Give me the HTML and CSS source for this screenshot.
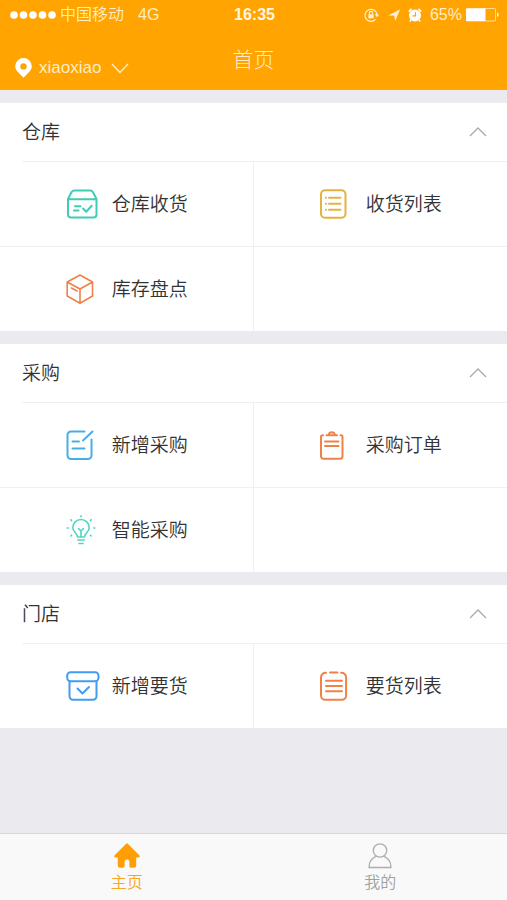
FILE: index.html
```html
<!DOCTYPE html>
<html lang="zh-CN">
<head>
    <meta charset="UTF-8">
    <meta name="viewport" content="width=device-width, initial-scale=1.0">
    <title>首页</title>
    <link rel="stylesheet" href="styles.css">
</head>
<body>
    <header class="header">
        <!-- Status bar -->
        <div class="status">
            <div class="status-left">
                <svg class="signal" width="46" height="8" viewBox="0 0 46 8" fill="#fff">
                    <circle cx="4" cy="4" r="3.800"/>
                    <circle cx="13.500" cy="4" r="3.800"/>
                    <circle cx="23" cy="4" r="3.800"/>
                    <circle cx="32.500" cy="4" r="3.800"/>
                    <circle cx="42" cy="4" r="3.800"/>
                </svg>
                <span class="carrier">中国移动</span>
                <span class="network">4G</span>
            </div>
            <span class="time">16:35</span>
            <div class="status-right">
                <svg width="16" height="14" viewBox="0 0 16 14" fill="none" stroke="#fff2d6">
                    <path d="M11.500 11.300A6 6 0 1 1 13 7" stroke-width="1.200"/>
                    <path d="M10.800 6.200h4.400L13 9.200z" fill="#fff2d6" stroke="none"/>
                    <path d="M5.400 6.500V5a1.600 1.600 0 0 1 3.200 0v1.500" stroke-width="1.100"/>
                    <rect x="4.400" y="6.300" width="5.200" height="4" fill="#fff2d6" stroke="none"/>
                </svg>
                <svg class="arrow" width="12" height="12" viewBox="0 0 12 12" fill="#fff2d6">
                    <path d="M12 .5L7.200 12 6.200 6.500H.3z"/>
                </svg>
                <svg class="alarm" width="14" height="14" viewBox="0 0 14 14">
                    <circle cx="7" cy="7.500" r="6" fill="#fff"/>
                    <path d="M.8 3.600L3.600.8M13.200 3.600L10.400.8M3 12l-1.200 1.400M11 12l1.200 1.400" stroke="#fff" stroke-width="1.600"/>
                    <path d="M7.400 4.200v3.600H4.600" fill="none" stroke="#ffa400" stroke-width="1.200"/>
                </svg>
                <span>65%</span>
                <svg class="battery" width="33" height="14" viewBox="0 0 33 14">
                    <rect x=".5" y=".5" width="29" height="12.500" rx="1" fill="none" stroke="#ffdc96"/>
                    <rect x="0" y=".5" width="19.500" height="12.500" fill="#fff"/>
                    <path d="M31 4.500c2.300.6 2.300 4 0 4.600z" fill="#fff2d6"/>
                </svg>
            </div>
        </div>

        <!-- Title bar -->
        <div class="navbar">
            <button type="button" class="location">
                <svg width="17" height="20" viewBox="0 0 17 20">
                    <path fill="#fff" fill-rule="evenodd" d="M8.500 0a8.300 8.300 0 0 0-8.300 8.300c0 4.300 4.400 7.200 8.300 11.500 3.900-4.300 8.300-7.200 8.300-11.500A8.300 8.300 0 0 0 8.500 0zm0 5.200a3.200 3.200 0 1 1 0 6.400 3.200 3.200 0 0 1 0-6.400z"/>
                </svg>
                <span>xiaoxiao</span>
                <svg class="down" width="18" height="11" viewBox="0 0 18 11" fill="none" stroke="#ffedc8" stroke-width="1.400">
                    <path d="M1 1l8 8.500L17 1"/>
                </svg>
            </button>
            <h1>首页</h1>
        </div>
    </header>

    <main class="content">
        <!-- Warehouse -->
        <section class="panel">
            <h2>
                <button type="button" class="panel-title">
                    <span>仓库</span>
                    <svg width="18" height="10" viewBox="0 0 18 10"><path d="M1 9l8-8 8 8"/></svg>
                </button>
            </h2>
            <div class="grid">
                <a class="item" href="#">
                    <svg class="icon teal" viewBox="0 0 34 30">
                        <path d="M2 10v15.500a3 3 0 0 0 3 3h22.500a3 3 0 0 0 3-3V10L27 3.200a3.500 3.500 0 0 0-3-1.800H8.500a3.500 3.500 0 0 0-3 1.800zM2 10.200h28.500"/>
                        <path d="M9 17.300h5.500M8 21.500h4.500M17 19.500l3.200 3.200 5.500-6"/>
                    </svg>
                    <span>仓库收货</span>
                </a>
                <a class="item" href="#">
                    <svg class="icon yellow" viewBox="0 0 34 30">
                        <rect x="1" y="1.200" width="24.500" height="27.600" rx="4"/>
                        <path d="M9 8.700h11.500M9 14.700h11.500M9 20.700h11.500M5.800 8.700h.2M5.800 14.700h.2M5.800 20.700h.2"/>
                    </svg>
                    <span>收货列表</span>
                </a>
                <a class="item" href="#">
                    <svg class="icon orange thin" viewBox="0 0 34 30">
                        <path d="M14 1L26.500 8v14L14 29.200 1.200 22V8zM1.200 8L14 15l12.500-7M14 15v14M5.500 14l5.500 3"/>
                    </svg>
                    <span>库存盘点</span>
                </a>
                <div class="item"></div>
            </div>
        </section>

        <!-- Purchase -->
        <section class="panel">
            <h2>
                <button type="button" class="panel-title">
                    <span>采购</span>
                    <svg width="18" height="10" viewBox="0 0 18 10"><path d="M1 9l8-8 8 8"/></svg>
                </button>
            </h2>
            <div class="grid">
                <a class="item" href="#">
                    <svg class="icon blue" viewBox="0 0 34 30">
                        <path d="M18.500 1.500H5a3.500 3.500 0 0 0-3.500 3.500v20.500A3.500 3.500 0 0 0 5 29h17a3.500 3.500 0 0 0 3.500-3.500V9.500M17 10.500l9.500-9M6.500 11.500h6.500M6.500 18.500h12"/>
                    </svg>
                    <span>新增采购</span>
                </a>
                <a class="item" href="#">
                    <svg class="icon orange" viewBox="0 0 34 30">
                        <path d="M3 5.300h-.500A1.500 1.500 0 0 0 1 6.800v19.500a2.500 2.500 0 0 0 2.500 2.500h16.500a2.500 2.500 0 0 0 2.500-2.500V6.800A1.500 1.500 0 0 0 21 5.300h-.500"/>
                        <path d="M6.500 5.300h10.500M8.500 5.300a3.300 3.800 0 0 1 6.500 0M5 11.500h13.500M5 16h13.500"/>
                    </svg>
                    <span>采购订单</span>
                </a>
                <a class="item" href="#">
                    <svg class="icon mint" viewBox="0 0 34 30">
                        <path d="M11.500 22c0-3.800-4.700-4.800-4.700-9.300a8.200 8.200 0 0 1 16.400 0c0 4.500-4.700 5.500-4.700 9.300zM11.800 25h6.500M13 28.500h4M15 22v-6l-2.500-2.500M15 16l2.500-2.500"/>
                        <path d="M15 .8v1M4.800 4.800l.8.800M25.200 4.800l-.8.800M1.200 13h1M27.800 13h1M4.800 21l.8-.8M25.200 21l-.8-.8"/>
                    </svg>
                    <span>智能采购</span>
                </a>
                <div class="item"></div>
            </div>
        </section>

        <!-- Store -->
        <section class="panel">
            <h2>
                <button type="button" class="panel-title">
                    <span>门店</span>
                    <svg width="18" height="10" viewBox="0 0 18 10"><path d="M1 9l8-8 8 8"/></svg>
                </button>
            </h2>
            <div class="grid">
                <a class="item" href="#">
                    <svg class="icon azure" viewBox="0 0 34 30">
                        <rect x="1.200" y="1.200" width="31.300" height="9" rx="3.500"/>
                        <path d="M3.500 10.200v15a3.500 3.500 0 0 0 3.500 3.500h20a3.500 3.500 0 0 0 3.500-3.500v-15M11.500 17.500l5 5 6.500-6.500"/>
                    </svg>
                    <span>新增要货</span>
                </a>
                <a class="item" href="#">
                    <svg class="icon orange" viewBox="0 0 34 30">
                        <path d="M6 1.800a4.500 4.500 0 0 0-5 4.500V24.500a4.300 4.300 0 0 0 4.300 4.300h16.500a4.300 4.300 0 0 0 4.300-4.300V6.300a4.500 4.500 0 0 0-5-4.500M10 1.500h7.500M6 9.700h16M6 15h16M6 20.300h16"/>
                    </svg>
                    <span>要货列表</span>
                </a>
            </div>
        </section>
    </main>

    <!-- Bottom tabs -->
    <nav class="tabbar">
        <a class="tab active" href="#">
            <svg width="26" height="26" viewBox="0 0 26 26">
                <path fill="#ff9f05" d="M11.900.9L.7 12.200c-1 1-.4 2.300.8 2.300h2.300V22.500c0 1.300.8 2.200 2 2.200h3.200c1 0 1.600-.6 1.600-1.600v-4.200a2.400 2.400 0 0 1 4.800 0v4.200c0 1 .6 1.600 1.600 1.600h3.200c1.200 0 2-.9 2-2.200v-8h2.300c1.200 0 1.800-1.300.8-2.300L14.100.9a1.500 1.500 0 0 0-2.200 0z"/>
            </svg>
            <span>主页</span>
        </a>
        <a class="tab" href="#">
            <svg width="26" height="26" viewBox="0 0 26 26" fill="none" stroke="#adadad" stroke-width="1.300">
                <circle cx="13" cy="7.500" r="6.700"/>
                <path d="M9.500 13.200C5 15 2 18.700 2 24.500h22c0-5.800-3-9.500-7.500-11.300"/>
            </svg>
            <span>我的</span>
        </a>
    </nav>
</body>
</html>
```
FILE: styles.css
```css
* {
    box-sizing: border-box;
}

body {
    display: flex;
    flex-direction: column;
    min-height: 100vh;
    margin: 0;
    background-color: #eaeaef;
    color: #333;
    font-family: "Liberation Sans", "Noto Sans CJK SC", sans-serif;
    font-size: 19px;
    font-weight: 350;
}

a {
    color: inherit;
    text-decoration: none;
}

button {
    border: none;
    background: none;
    color: inherit;
    font: inherit;
    cursor: pointer;
}

svg {
    flex: none;
}

/* Header */
.header {
    height: 90px;
    background-color: #ffa400;
    color: #ffedc8;
}

.status {
    display: grid;
    grid-template-columns: 1fr auto 1fr;
    align-items: center;
    height: 30px;
    padding: 0 8px 0 10px;
    font-size: 16px;
    line-height: 30px;
}

.status-left,
.status-right {
    display: flex;
    align-items: center;
}

.status-right {
    justify-content: flex-end;
}

.signal {
    margin-right: 4px;
}

.network {
    margin-left: 14px;
}

.time {
    color: #fff6e4;
    font-weight: bold;
}

.arrow {
    margin-left: 8px;
}

.alarm {
    margin: 0 8px;
}

.battery {
    margin-left: 4px;
}

.navbar {
    display: grid;
    grid-template-columns: 1fr auto 1fr;
    height: 60px;
}

.location {
    display: flex;
    align-items: center;
    justify-self: start;
    height: 44px;
    margin-top: 16px;
    padding: 0 0 0 15px;
    font-size: 17px;
}

.location span {
    margin: 0 10px 0 7px;
}

.navbar h1 {
    margin: 0;
    font-size: 21px;
    font-weight: 300;
    line-height: 60px;
}

/* Panels */
.content {
    flex: 1;
    padding-top: 13px;
}

.panel {
    margin-bottom: 13px;
    background-color: #fff;
}

.panel h2 {
    margin: 0 0 0 22px;
    border-bottom: 1px solid #f0f0f2;
    font-size: 19px;
    font-weight: 350;
}

.panel-title {
    display: flex;
    align-items: center;
    justify-content: space-between;
    width: 100%;
    height: 58px;
    padding: 0 20px 0 0;
}

.panel-title span,
.item span {
    padding-bottom: 3px;
}

.panel-title svg {
    fill: none;
    stroke: #aaa;
    stroke-width: 1.3;
}

.grid {
    display: grid;
    grid-template-columns: 1fr 1fr;
    row-gap: 1px;
    background-color: #f0f0f2;
}

.item {
    display: flex;
    align-items: center;
    justify-content: center;
    gap: 12px;
    height: 84px;
    padding-left: 1px;
    background-color: #fff;
}

.item:nth-child(odd) {
    border-right: 1px solid #f0f0f2;
}

/* Icons */
.icon {
    width: 34px;
    height: 30px;
    fill: none;
    stroke: currentColor;
    stroke-width: 2;
    stroke-linecap: round;
    stroke-linejoin: round;
}

.thin {
    stroke-width: 1.6;
}

.teal {
    color: #3fcdb4;
}

.yellow {
    color: #e3b341;
}

.orange {
    color: #f08149;
}

.blue {
    color: #48aee8;
}

.mint {
    color: #4fd6bf;
    stroke-width: 1.6;
}

.azure {
    color: #439cf0;
}

/* Tab bar */
.tabbar {
    display: flex;
    height: 67px;
    border-top: 1px solid #d9d9dd;
    background-color: #f9f9f9;
}

.tab {
    display: flex;
    flex: 1;
    flex-direction: column;
    align-items: center;
    padding-top: 9px;
    color: #a0a0a0;
    font-size: 16px;
    line-height: 28px;
}

.active {
    color: #f5a623;
}
```
